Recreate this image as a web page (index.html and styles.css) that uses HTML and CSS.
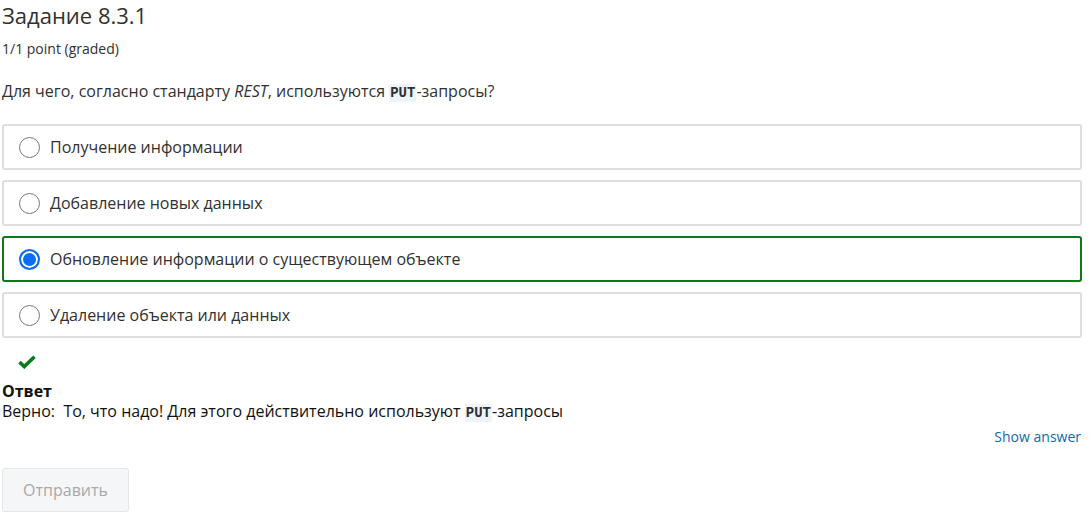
FILE: index.html
```html
<!DOCTYPE html>
<html lang="ru">
<head>
<meta charset="utf-8">
<title>Задание 8.3.1</title>
<link rel="stylesheet" href="styles.css">
</head>
<body>
<div class="problem">
  <h3 class="title">Задание 8.3.1</h3>
  <div class="points">1/1 point (graded)</div>
  <p class="question">Для чего, согласно стандарту <em>REST</em>, используются <code>PUT</code>-запросы?</p>
  <div class="options">
    <label class="option"><span class="radio"></span><span>Получение информации</span></label>
    <label class="option"><span class="radio"></span><span>Добавление новых данных</span></label>
    <label class="option correct"><span class="radio checked"></span><span>Обновление информации о существующем объекте</span></label>
    <label class="option"><span class="radio"></span><span>Удаление объекта или данных</span></label>
  </div>
  <div class="status">
    <svg width="18" height="14" viewBox="0 0 18 14"><path d="M1.5 7.2 L6.3 11.6 L16.5 1.8" fill="none" stroke="#0b7a1f" stroke-width="3.6" stroke-linejoin="miter"/></svg>
  </div>
  <div class="answer">
    <div class="answer-label">Ответ</div>
    <div class="answer-text">Верно:&nbsp; То, что надо! Для этого действительно используют <code>PUT</code>-запросы</div>
  </div>
  <div class="actions-right"><a class="show-answer" href="#">Show answer</a></div>
  <button class="submit" disabled>Отправить</button>
</div>
</body>
</html>
```
FILE: styles.css
```css
html, body {
  margin: 0;
  padding: 0;
  background: #fff;
}
body {
  font-family: "Open Sans", "Noto Sans", sans-serif;
  color: #313131;
}
.problem {
  width: 1080px;
  padding-left: 2px;
}
.title {
  margin: 0;
  font-size: 22px;
  font-weight: 400;
  line-height: 30px;
  color: #313131;
}
.points {
  margin-top: 8px;
  font-size: 14px;
  line-height: 22px;
  color: #313131;
}
.question {
  margin: 20px 0 0;
  font-size: 16px;
  line-height: 22px;
  color: #313131;
}
code {
  font-family: "Liberation Mono", "DejaVu Sans Mono", monospace;
  font-weight: 700;
  font-size: 14px;
  background: #edf5fb;
  padding: 1px 1px;
  color: #313131;
}
.options {
  margin-top: 20px;
  display: flex;
  flex-direction: column;
  gap: 10px;
}
.option {
  box-sizing: border-box;
  height: 46px;
  display: flex;
  align-items: center;
  gap: 10px;
  padding-left: 15px;
  border: 2px solid #dedede;
  border-radius: 3px;
  font-size: 16px;
  color: #313131;
}
.option.correct {
  border-color: #0b7a1f;
}
.radio {
  box-sizing: border-box;
  width: 21px;
  height: 21px;
  border-radius: 50%;
  border: 1px solid #767676;
  background: #fff;
  flex: none;
}
.radio.checked {
  border: 2px solid #0a6ef2;
  background: #0a6ef2;
  box-shadow: inset 0 0 0 2px #fff;
}
.status {
  height: 39px;
  padding-left: 16px;
  display: flex;
  align-items: center;
  margin-top: 4px;
}
.answer {
  font-size: 16px;
  line-height: 20px;
}
.answer-label {
  font-weight: 700;
  color: #111;
}
.answer-text {
  color: #111;
}
.actions-right {
  display: flex;
  justify-content: flex-end;
  margin-top: 4px;
  padding-right: 1px;
}
.show-answer {
  font-size: 14px;
  line-height: 20px;
  color: #0d6ba8;
  text-decoration: none;
}
.submit {
  margin-top: 21px;
  box-sizing: border-box;
  width: 127px;
  height: 44px;
  border: 1px solid #e4e6e8;
  border-radius: 3px;
  background: #f5f6f7;
  color: #a7a9ab;
  font-family: "Open Sans", "Noto Sans", sans-serif;
  font-size: 16px;
}
```
